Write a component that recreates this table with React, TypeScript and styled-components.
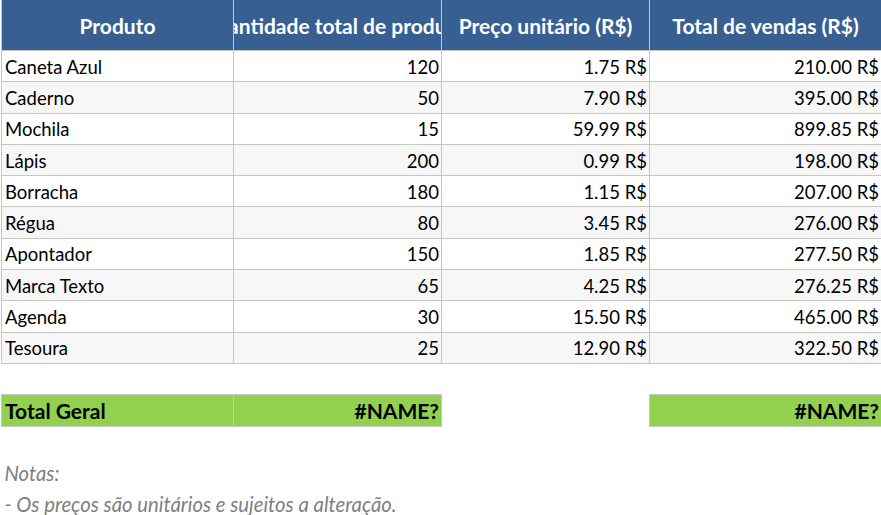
import React from "react"
import styled, { createGlobalStyle, css } from "styled-components"

const GlobalStyle = createGlobalStyle`
  html, body {
    margin: 0;
    padding: 0;
    background: #ffffff;
  }
  body {
    font-family: Lato, "Liberation Sans", sans-serif;
  }
`

const Sheet = styled.div`
  width: 881px;
  height: 515px;
  overflow: hidden;
  padding-left: 1px;
  box-sizing: border-box;
`

const Table = styled.table`
  border-collapse: collapse;
  table-layout: fixed;
  width: 880px;
`

const HeaderCell = styled.th`
  height: 50px;
  padding: 0;
  background: #375f91;
  color: #ffffff;
  font-size: 21px;
  font-weight: 700;
  border: 1px solid #c6c6c6;
  border-top: none;
  overflow: hidden;
`

// centres the caption and clips it on both sides when it is too wide
const HeaderText = styled.div`
  display: flex;
  justify-content: center;
  white-space: nowrap;
  overflow: hidden;
  padding-top: 1px;
`

const Row = styled.tr<{ $shade?: boolean }>`
  height: 31.3px;
  background: ${props => (props.$shade ? "#f7f7f7" : "#ffffff")};
`

const Cell = styled.td<{ $num?: boolean }>`
  padding: 1px 2px 0 3px;
  font-size: 18.5px;
  color: #000000;
  border: 1px solid #c6c6c6;
  white-space: nowrap;
  overflow: hidden;
  text-align: ${props => (props.$num ? "right" : "left")};
`

const Spacer = styled.tr`
  height: 31.3px;
`

const totalStyle = css`
  background: #92d050;
  font-weight: 700;
  font-size: 21px;
`

const TotalCell = styled(Cell)<{ $empty?: boolean }>`
  ${props => !props.$empty && totalStyle}
  ${props =>
    props.$empty &&
    css`
      border-top: none;
      border-bottom: none;
      background: transparent;
    `}
`

const NoteCell = styled.td`
  padding: 0 3px;
  font-size: 20.3px;
  font-style: italic;
  color: #7f7f7f;
  white-space: nowrap;
`

const NoteRow = styled.tr`
  height: 31.3px;
`

type Item = { name: string; qty: number; price: number }

const items: Item[] = [
  { name: "Caneta Azul", qty: 120, price: 1.75 },
  { name: "Caderno", qty: 50, price: 7.9 },
  { name: "Mochila", qty: 15, price: 59.99 },
  { name: "Lápis", qty: 200, price: 0.99 },
  { name: "Borracha", qty: 180, price: 1.15 },
  { name: "Régua", qty: 80, price: 3.45 },
  { name: "Apontador", qty: 150, price: 1.85 },
  { name: "Marca Texto", qty: 65, price: 4.25 },
  { name: "Agenda", qty: 30, price: 15.5 },
  { name: "Tesoura", qty: 25, price: 12.9 },
]

const money = (v: number) => `${v.toFixed(2)} R$`

const headers = [
  "Produto",
  "Quantidade total de produtos",
  "Preço unitário (R$)",
  "Total de vendas (R$)",
]

export default function App() {
  return (
    <Sheet>
      <GlobalStyle />
      <Table>
        <colgroup>
          <col style={{ width: 232 }} />
          <col style={{ width: 208 }} />
          <col style={{ width: 208 }} />
          <col style={{ width: 232 }} />
        </colgroup>
        <thead>
          <tr>
            {headers.map(h => (
              <HeaderCell key={h}>
                <HeaderText>{h}</HeaderText>
              </HeaderCell>
            ))}
          </tr>
        </thead>
        <tbody>
          {items.map((it, i) => (
            <Row key={it.name} $shade={i % 2 === 1}>
              <Cell>{it.name}</Cell>
              <Cell $num>{it.qty}</Cell>
              <Cell $num>{money(it.price)}</Cell>
              <Cell $num>{money(Math.round(it.qty * it.price * 100) / 100)}</Cell>
            </Row>
          ))}
          <Spacer>
            <td colSpan={4} />
          </Spacer>
          <Row>
            <TotalCell>Total Geral</TotalCell>
            <TotalCell $num>#NAME?</TotalCell>
            <TotalCell $empty />
            <TotalCell $num>#NAME?</TotalCell>
          </Row>
          <Spacer>
            <td colSpan={4} />
          </Spacer>
          <NoteRow>
            <NoteCell colSpan={4}>Notas:</NoteCell>
          </NoteRow>
          <NoteRow>
            <NoteCell colSpan={4}>- Os preços são unitários e sujeitos a alteração.</NoteCell>
          </NoteRow>
        </tbody>
      </Table>
    </Sheet>
  )
}
